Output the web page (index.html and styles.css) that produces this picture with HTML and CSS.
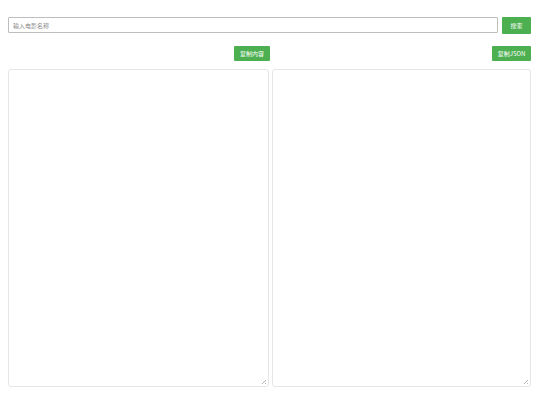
FILE: index.html
```html
<!DOCTYPE html>
<html lang="zh">
<head>
<meta charset="utf-8">
<title>电影搜索</title>
<link rel="stylesheet" href="styles.css">
</head>
<body>
<div class="page">
  <div class="search-row">
    <input class="search-input" type="text" placeholder="输入电影名称">
    <button class="btn btn-search">搜索</button>
  </div>
  <div class="panels">
    <div class="panel">
      <button class="btn btn-copy btn-copy-text">复制内容</button>
      <div class="output-wrap">
        <textarea class="output"></textarea>
      </div>
    </div>
    <div class="panel">
      <button class="btn btn-copy btn-copy-json">复制JSON</button>
      <div class="output-wrap">
        <textarea class="output"></textarea>
      </div>
    </div>
  </div>
</div>
</body>
</html>
```

FILE: styles.css
```css
html, body {
  margin: 0;
  padding: 0;
  background: #ffffff;
}

body {
  font-family: "Noto Sans CJK SC", "Liberation Sans", sans-serif;
}

.page {
  padding: 17px 9px 0 8px;
}

.search-row {
  display: flex;
  gap: 4px;
  height: 17px;
}

.search-input {
  flex: 1;
  height: 16px;
  box-sizing: border-box;
  border: 1px solid #bdbdbd;
  border-radius: 1px;
  padding: 0 4px;
  font-size: 6px;
  font-family: inherit;
  color: #333;
  outline: none;
}

.search-input::placeholder {
  color: #8a8a8a;
}

.btn {
  border: none;
  background: #4caf50;
  color: #ffffff;
  font-family: inherit;
  font-size: 6px;
  border-radius: 1px;
  padding: 0;
  cursor: pointer;
  box-sizing: border-box;
}

.btn-search {
  width: 29px;
  height: 17px;
}

.panels {
  margin-top: 12px;
  display: grid;
  grid-template-columns: 261px 1fr;
  gap: 3px;
}

.panel {
  display: flex;
  flex-direction: column;
  align-items: flex-end;
}

.btn-copy {
  height: 15px;
}

.btn-copy-text {
  width: 36px;
  margin-right: -1px;
}

.btn-copy-json {
  width: 39px;
}

.output-wrap {
  position: relative;
  margin-top: 8px;
  width: 100%;
  height: 318px;
}

.output {
  display: block;
  width: 100%;
  height: 100%;
  box-sizing: border-box;
  border: 1px solid #e6e6e6;
  border-radius: 3px;
  font-size: 6px;
  font-family: inherit;
  padding: 4px;
  resize: none;
  outline: none;
}

.output-wrap::after {
  content: "";
  position: absolute;
  right: 3px;
  bottom: 3px;
  width: 4px;
  height: 4px;
  background:
    linear-gradient(135deg, transparent 45%, #b5b5b5 45%, #b5b5b5 60%, transparent 60%, transparent 80%, #b5b5b5 80%);
  pointer-events: none;
}
```
